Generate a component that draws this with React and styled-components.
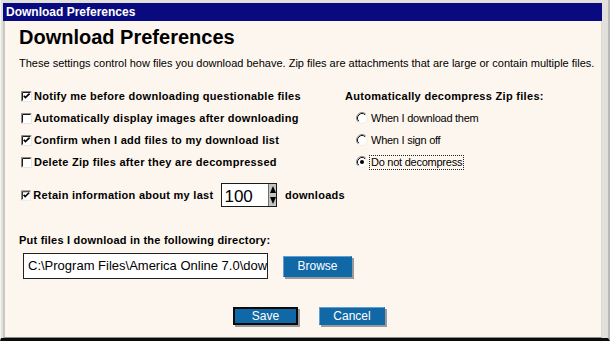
import React from "react";
import styled, { createGlobalStyle } from "styled-components";

const GlobalStyle = createGlobalStyle`
  html, body { margin: 0; padding: 0; background: #fdf6ee; }
  body { font-family: "Liberation Sans", Arial, sans-serif; }
  * { box-sizing: border-box; }
`;

const Window = styled.div`
  width: 610px;
  height: 341px;
  display: flex;
  flex-direction: column;
  background: #e2e0da;
  border-left: 1px solid #f4f4f0;
  border-right: 2px solid #b8b8b4;
  border-bottom: 3px solid #0c0c0c;
  padding: 3px 6px 0 2px;
`;

const TitleBar = styled.div`
  height: 18px;
  flex: none;
  background: #0a0a80;
  color: #fff;
  font-weight: bold;
  font-size: 12px;
  line-height: 18px;
  padding-left: 3px;
`;

const Content = styled.div`
  flex: 1;
  background: #fdf6ee;
  border-left: 2px solid #c9c8c2;
  border-right: 1px solid #d8d8d4;
  border-bottom: 1px solid #8a8a88;
  padding: 5px 14px 0 14px;
  display: flex;
  flex-direction: column;
  color: #000;
`;

const Heading = styled.h1`
  margin: 0;
  font-size: 20px;
  line-height: 23px;
  font-weight: bold;
`;

const Description = styled.p`
  margin: 8px 0 0;
  font-size: 11px;
  line-height: 13px;
  white-space: nowrap;
`;

const OptionsGrid = styled.div`
  margin-top: 15px;
  display: grid;
  grid-template-columns: 326px 1fr;
`;

const Column = styled.div`
  display: flex;
  flex-direction: column;
`;

const CheckRow = styled.label`
  height: 22px;
  display: flex;
  align-items: center;
  gap: 2px;
  padding-left: 2px;
  font-size: 11px;
  font-weight: bold;
  letter-spacing: 0.28px;
  white-space: nowrap;
`;

const SpinRow = styled(CheckRow)`
  height: 24px;
  margin-top: 10px;
`;

const SpinLabel = styled.span`
  margin-right: 6px;
`;

const SpinBox = styled.div`
  width: 59px;
  height: 24px;
  display: flex;
  border: 1px solid #1a1a1a;
  background: #fff;
  margin-right: 6px;
  letter-spacing: 0;
`;

const SpinValue = styled.span`
  flex: 1;
  font-size: 17px;
  font-weight: normal;
  line-height: 24px;
  padding-left: 2px;
  padding-top: 1px;
`;

const SpinArrows = styled.div`
  width: 8px;
  display: flex;
  flex-direction: column;
  justify-content: space-between;
  align-items: center;
  background: #c4c4c0;
  border-left: 1px solid #707070;
  padding: 2px 0;
`;

const GroupTitle = styled.div`
  height: 22px;
  display: flex;
  align-items: center;
  font-size: 11px;
  font-weight: bold;
  letter-spacing: 0.3px;
  white-space: nowrap;
`;

const RadioRow = styled.label`
  height: 22px;
  display: flex;
  align-items: center;
  gap: 1px;
  padding-left: 11px;
  font-size: 11px;
  letter-spacing: -0.25px;
`;

const RadioText = styled.span`
  padding: 0 1px;
  line-height: 13px;
  border: 1px dotted ${(p) => (p.$focused ? "#222" : "transparent")};
`;

const DirLabel = styled.div`
  margin-top: 26px;
  font-size: 11px;
  font-weight: bold;
  line-height: 14px;
  letter-spacing: 0.22px;
`;

const DirRow = styled.div`
  margin-top: 6px;
  display: flex;
  align-items: center;
  gap: 15px;
  padding-left: 4px;
`;

const PathField = styled.div`
  width: 245px;
  height: 26px;
  border: 1px solid #222;
  background: #fff;
  font-size: 13px;
  line-height: 24px;
  padding-left: 4px;
  white-space: nowrap;
  overflow: hidden;
`;

const Button = styled.button`
  width: ${(p) => p.$w}px;
  height: ${(p) => p.$h}px;
  padding: 0;
  margin: 0;
  font-family: "Liberation Sans", Arial, sans-serif;
  font-size: 12px;
  color: #fff;
  background: #1168a6;
  border: ${(p) => (p.$default ? "2px solid #0a0a0a" : "1px solid #1168a6")};
  border-top-color: ${(p) => (p.$default ? "#0a0a0a" : "#5f9fd2")};
  border-left-color: ${(p) => (p.$default ? "#0a0a0a" : "#5f9fd2")};
  box-shadow: 2px 2px 0 #9a9a9c;
  line-height: 1;
`;

const ButtonBar = styled.div`
  margin-top: 28px;
  display: flex;
  justify-content: center;
  gap: 21px;
  padding-left: 12px;
`;

const CheckBox = ({ checked }) => (
  <svg width="11" height="11" viewBox="0 0 11 11">
    <rect x="0" y="0" width="11" height="11" fill="#fff" />
    <path d="M0.5 10.5V0.5H10.5" stroke="#8a8a8a" fill="none" />
    <path d="M1.5 9.5V1.5H9.5" stroke="#1a1a1a" fill="none" />
    <path d="M10.5 0.5V10.5H0.5" stroke="#e8e6e0" fill="none" />
    {checked && (
      <polyline points="2.8,4.8 4.4,6.6 8.6,2.6" stroke="#000" strokeWidth="1.7" fill="none" />
    )}
  </svg>
);

const Radio = ({ checked }) => (
  <svg width="12" height="12" viewBox="0 0 12 12">
    <circle cx="6" cy="6" r="5" fill="#fff" />
    <path d="M2.11 9.89A5.5 5.5 0 0 1 9.89 2.11" stroke="#8a8a8a" fill="none" />
    <path d="M2.82 9.18A4.5 4.5 0 0 1 9.18 2.82" stroke="#111" fill="none" />
    <path d="M9.89 2.11A5.5 5.5 0 0 1 2.11 9.89" stroke="#f0eee8" fill="none" />
    {checked && <circle cx="6" cy="6" r="2" fill="#000" />}
  </svg>
);

const UpDown = () => (
  <>
    <svg width="6" height="7" viewBox="0 0 6 7">
      <polygon points="3,0 6,7 0,7" fill="#000" />
    </svg>
    <svg width="6" height="7" viewBox="0 0 6 7">
      <polygon points="0,0 6,0 3,7" fill="#000" />
    </svg>
  </>
);

const checks = [
  { label: "Notify me before downloading questionable files", checked: true },
  { label: "Automatically display images after downloading", checked: false },
  { label: "Confirm when I add files to my download list", checked: true },
  { label: "Delete Zip files after they are decompressed", checked: false },
];

const radios = [
  { label: "When I download them", checked: false },
  { label: "When I sign off", checked: false },
  { label: "Do not decompress", checked: true },
];

export default function App() {
  return (
    <>
      <GlobalStyle />
      <Window>
        <TitleBar>Download Preferences</TitleBar>
        <Content>
          <Heading>Download Preferences</Heading>
          <Description>
            These settings control how files you download behave. Zip files are attachments that are large or contain multiple files.
          </Description>
          <OptionsGrid>
            <Column>
              {checks.map((c) => (
                <CheckRow key={c.label}>
                  <CheckBox checked={c.checked} />
                  <span>{c.label}</span>
                </CheckRow>
              ))}
              <SpinRow>
                <CheckBox checked />
                <SpinLabel>Retain information about my last</SpinLabel>
                <SpinBox>
                  <SpinValue>100</SpinValue>
                  <SpinArrows>
                    <UpDown />
                  </SpinArrows>
                </SpinBox>
                <span>downloads</span>
              </SpinRow>
            </Column>
            <Column>
              <GroupTitle>Automatically decompress Zip files:</GroupTitle>
              {radios.map((r) => (
                <RadioRow key={r.label}>
                  <Radio checked={r.checked} />
                  <RadioText $focused={r.checked}>{r.label}</RadioText>
                </RadioRow>
              ))}
            </Column>
          </OptionsGrid>
          <DirLabel>Put files I download in the following directory:</DirLabel>
          <DirRow>
            <PathField>C:\Program Files\America Online 7.0\dow</PathField>
            <Button $w={69} $h={21}>Browse</Button>
          </DirRow>
          <ButtonBar>
            <Button $w={65} $h={18} $default>Save</Button>
            <Button $w={66} $h={18}>Cancel</Button>
          </ButtonBar>
        </Content>
      </Window>
    </>
  );
}
